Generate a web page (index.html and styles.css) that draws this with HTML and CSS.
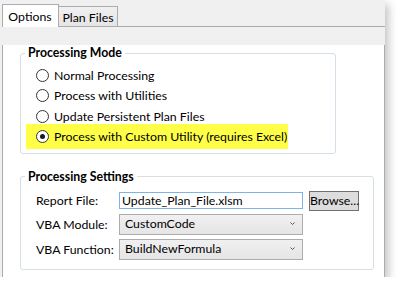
FILE: index.html
```html
<!DOCTYPE html>
<html lang="en">
<head>
    <meta charset="UTF-8">
    <meta name="viewport" content="width=device-width, initial-scale=1.0">
    <title>Options</title>
    <link rel="stylesheet" href="styles.css">
</head>
<body>
    <div class="window">
        <!-- Tab strip -->
        <div class="tabs">
            <div class="tab active">Options</div>
            <div class="tab">Plan Files</div>
        </div>

        <div class="panel">
            <!-- Processing Mode -->
            <fieldset class="group mode-group">
                <legend>Processing Mode</legend>
                <label class="radio-row"><input type="radio" name="mode"> Normal Processing</label>
                <label class="radio-row"><input type="radio" name="mode"> Process with Utilities</label>
                <label class="radio-row"><input type="radio" name="mode"> Update Persistent Plan Files</label>
                <label class="radio-row highlight"><input type="radio" name="mode" checked> Process with Custom Utility (requires Excel)</label>
            </fieldset>

            <!-- Processing Settings -->
            <fieldset class="group settings-group">
                <legend>Processing Settings</legend>
                <div class="settings-grid">
                    <span class="field-label">Report File:</span>
                    <input class="textbox" type="text" value="Update_Plan_File.xlsm">
                    <button class="browse-button">Browse...</button>

                    <span class="field-label">VBA Module:</span>
                    <div class="combo">
                        <span>CustomCode</span>
                        <svg width="5" height="3" viewBox="0 0 5 3"><polyline points="0.5,0.5 2.5,2.5 4.5,0.5" fill="none" stroke="#555555" stroke-width="1"/></svg>
                    </div>
                    <span></span>

                    <span class="field-label">VBA Function:</span>
                    <div class="combo">
                        <span>BuildNewFormula</span>
                        <svg width="5" height="3" viewBox="0 0 5 3"><polyline points="0.5,0.5 2.5,2.5 4.5,0.5" fill="none" stroke="#555555" stroke-width="1"/></svg>
                    </div>
                    <span></span>
                </div>
            </fieldset>
        </div>
    </div>
</body>
</html>
```

FILE: styles.css
```css
* {
    box-sizing: border-box;
}

body {
    margin: 0;
    background: #ffffff;
    font-family: Lato, "Open Sans", sans-serif;
    font-size: 12.3px;
    color: #000000;
}

.window {
    width: 385px;
    height: 277px;
    padding-left: 2px;
    background: #f0f0f0;
    box-shadow: 4px 4px 8px rgba(0, 0, 0, 0.22);
}

/* Tabs */
.tabs {
    display: flex;
    align-items: flex-end;
    height: 27px;
    border-bottom: 1px solid #acacac;
}

.tab {
    height: 20px;
    width: 60px;
    margin-left: -1px;
    border: 1px solid #acacac;
    border-bottom: none;
    background: linear-gradient(#f0f0f0, #e5e5e5);
    display: flex;
    align-items: center;
    justify-content: center;
    padding-top: 1px;
}

.tab.active {
    position: relative;
    width: 57px;
    height: 23px;
    margin-left: 0;
    margin-bottom: -1px;
    background: #ffffff;
    padding-top: 0;
    padding-right: 1px;
}

.panel {
    height: 250px;
    background: #ffffff;
    border: 1px solid #acacac;
    border-top: none;
    padding-left: 17px;
}

/* Group boxes */
.group {
    margin: 0;
    border: 1px solid #d5dfe5;
    border-radius: 3px;
    min-width: 0;
}

.group legend {
    margin-left: -1px;
    padding: 0 3px;
    line-height: 16px;
    font-weight: 700;
}

.mode-group {
    width: 316px;
    margin-top: 18px;
    padding: 4px 0 4px 5px;
    display: flex;
    flex-direction: column;
}

.radio-row {
    display: flex;
    align-items: center;
    height: 20.5px;
    padding-left: 10px;
    gap: 5px;
    white-space: nowrap;
}

.radio-row.highlight {
    width: 262px;
    height: 25px;
    margin-top: -3px;
    background: #ffff48;
}

.radio-row input {
    appearance: none;
    flex-shrink: 0;
    margin: 0;
    width: 13px;
    height: 13px;
    border: 1px solid #333333;
    border-radius: 50%;
    background: #ffffff;
    display: flex;
    align-items: center;
    justify-content: center;
}

.radio-row input:checked::after {
    content: "";
    width: 5px;
    height: 5px;
    border-radius: 50%;
    background: #1a1a1a;
}

.settings-group {
    width: 354px;
    margin-top: 15px;
    padding: 6px 0 9px 5px;
}

.settings-grid {
    margin-left: 10px;
    display: grid;
    grid-template-columns: 77px 184px 50px;
    grid-template-rows: 20px 21px 21px;
    column-gap: 6px;
    row-gap: 3.5px;
    align-items: center;
}

.field-label {
    white-space: nowrap;
}

.textbox {
    width: 184px;
    height: 17px;
    margin: 0;
    padding: 0 0 0 2px;
    border: 1px solid #7eb4ea;
    font-family: inherit;
    font-size: inherit;
    color: #000000;
    outline: none;
}

.browse-button {
    width: 50px;
    height: 20px;
    margin: 0;
    padding: 0;
    border: 1px solid #707070;
    background: #dddddd;
    font-family: inherit;
    font-size: inherit;
    color: #000000;
}

.combo {
    height: 21px;
    border: 1px solid #acacac;
    background: linear-gradient(#f0f0f0, #e5e5e5);
    display: flex;
    align-items: center;
    justify-content: space-between;
    padding: 0 7px 2px 5px;
}

.combo svg {
    display: block;
}
```
